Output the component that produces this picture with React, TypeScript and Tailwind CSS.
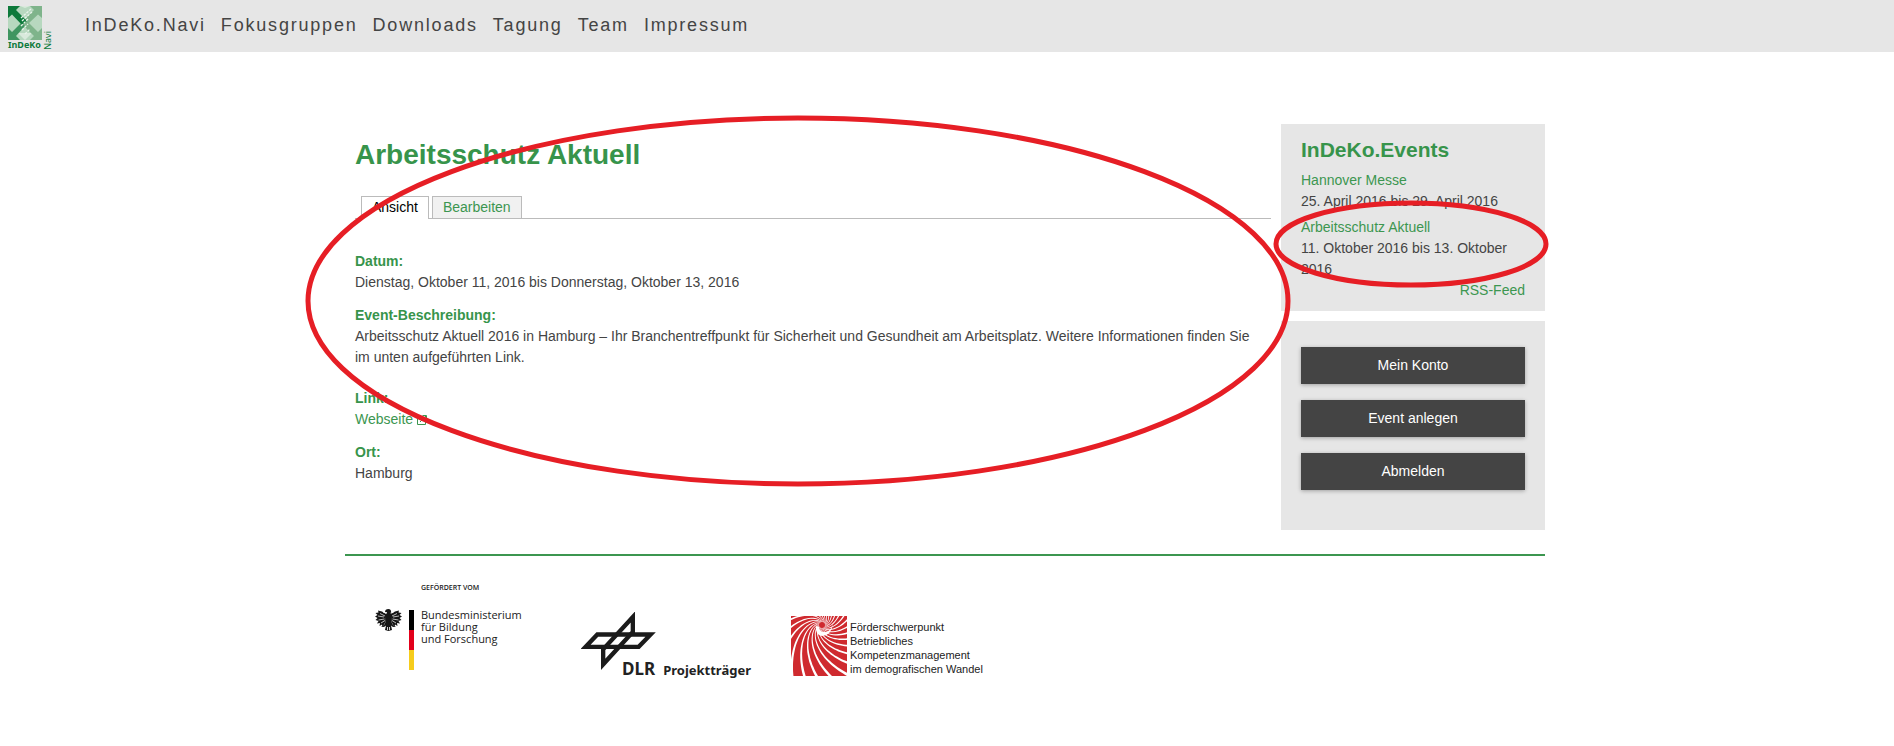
import React from 'react';

const navItems = ['InDeKo.Navi', 'Fokusgruppen', 'Downloads', 'Tagung', 'Team', 'Impressum'];
const accountActions = ['Mein Konto', 'Event anlegen', 'Abmelden'];

function NaviLogo() {
  return (
    <a href="#" className="flex h-12 w-12 items-end gap-0.5 text-[#0d7a3b]" aria-label="InDeKo Navi">
      <span className="flex flex-col">
        <svg width="34" height="34" viewBox="0 0 34 34" aria-hidden="true">
          <rect width="34" height="34" fill="#b7d8bf" />
          <path d="M17 2 L22 0 H12 Z M17 34 L24 27 L10 27 Z" fill="#d9eadc" />
          <path d="M34 0 V12 L30 8.500 L21 17 L30 26 L34 22 V34 H22 L26 30 L15 19 V15 L26 4 L22 0 Z" fill="#7fb48b" />
          <path d="M0 34 V22 L4 26 L13 17 L17 20 L8 30 L12 34 Z" fill="#3f9560" />
          <path d="M0 0 H12 L8 4 L19 15 L14 19 L4 8.500 L0 12 Z" fill="#0d7a3b" />
          <path d="M13 12 L23 3 M14 15 L24 6 M13 20 L20 13 M14 24 L20 18 M17 28 L22 23" stroke="#e9f4eb" strokeWidth="1.300" strokeDasharray="2.500 1.200" />
        </svg>
        <span className="h-2.5 font-['Noto_Sans'] text-[9px] leading-[10px] font-bold">InDeKo</span>
      </span>
      <span className="rotate-180 font-['Noto_Sans'] text-[9px] leading-[8px] [writing-mode:vertical-rl]">Navi</span>
    </a>
  );
}

function ExternalIcon() {
  return (
    <svg className="ml-1 inline-block" width="10" height="10" viewBox="0 0 10 10" fill="none" stroke="#3c9650" aria-hidden="true">
      <path d="M5 1.500 H0.500 V9.500 H8.500 V5.500 M3 7 L9 1 M5.500 0.500 H9.500 V4.500" />
    </svg>
  );
}

function Field({ label, children }: { label: string; children: React.ReactNode }) {
  return (
    <div>
      <h3 className="font-bold text-[#37944b]">{label}</h3>
      {children}
    </div>
  );
}

function Eagle() {
  const wing =
    'M11 5 L7 2.500 L3 1.500 L3.500 3.500 L0.500 4 L2.500 6 L0 7.500 L2.500 9 L0.500 11 L3.500 12 L2 14.500 L5 14 L4.500 17 L7 15.500 L7.500 18 L10.500 13 Z';
  return (
    <svg width="27" height="22" viewBox="0 0 27 22" fill="#161616" aria-hidden="true">
      <path d={wing} />
      <path d={wing} transform="matrix(-1 0 0 1 27 0)" />
      <path d="M10 3 Q10 0 13.500 0 Q16 0 16 2.500 L17 6 L16.500 13 L18 16 L21 17.500 L18 18 L16 16.500 L17 21 L13.500 22 L10 21 L11 16.500 L9 18 L6 17.500 L9 16 L10.500 13 L10 6 L12 4 Z" />
      <path d="M3 7 L9 8 M3.500 11 L9.500 10 M6 14 L10 11.500 M24 7 L18 8 M23.500 11 L17.500 10 M21 14 L17 11.500 M5 4.500 L10 7 M22 4.500 L17 7" stroke="#fff" strokeWidth="0.700" fill="none" />
      <path d="M8 3.200 L12 3.600 M15.500 4 L18.500 3.200 M12.500 18 V21 M14.500 18 V21" stroke="#fff" strokeWidth="0.800" />
    </svg>
  );
}

function DlrMark() {
  return (
    <svg width="75" height="58" viewBox="65 66 225 174" fill="none" stroke="#1b1b1b" strokeWidth="13" strokeMiterlimit="8" aria-hidden="true">
      <path d="M79 170.500 L114 133.500 H274 L238 170.500 Z" />
      <path d="M220.500 81 V126 L131.500 223 V178 Z" />
    </svg>
  );
}

function spiralRay(start: number) {
  const cx = 31;
  const cy = 9;
  const left: string[] = [];
  const right: string[] = [];
  for (let r = 3; r <= 69; r += 2) {
    const angle = start - 0.7 * Math.log(r / 3);
    const half = 0.025 + 0.25 / r;
    left.push(`${(cx + r * Math.cos(angle - half)).toFixed(1)},${(cy + r * Math.sin(angle - half)).toFixed(1)}`);
    right.unshift(`${(cx + r * Math.cos(angle + half)).toFixed(1)},${(cy + r * Math.sin(angle + half)).toFixed(1)}`);
  }
  return [...left, ...right].join(' ');
}

function SpiralMark() {
  const rays = Array.from({ length: 24 }, (_, i) => spiralRay((i * Math.PI * 2) / 24));
  return (
    <svg width="56" height="60" viewBox="0 0 56 60" aria-hidden="true">
      <rect width="56" height="60" fill="#cf2a2f" />
      {rays.map((points) => (
        <polygon key={points} points={points} fill="#fff" />
      ))}
      <path d="M25 10 Q24 19 31 20 Q40 20 42 8 Q39 16 34 16 Q28 16 28 11 Z" fill="#fff" />
    </svg>
  );
}

export default function App() {
  return (
    <div className="bg-white font-['Liberation_Sans',Arial,sans-serif] text-sm leading-[21px] text-[#444]">
      <header className="flex h-13 items-center bg-[#e6e6e6] pl-2">
        <NaviLogo />
        <nav className="ml-[29px] flex gap-[15px] pb-0.5 text-lg tracking-widest">
          {navItems.map((item) => (
            <a key={item} href="#">{item}</a>
          ))}
        </nav>
      </header>

      <div className="pr-1">
        <div className="relative mx-auto mt-18 max-w-[1200px]">
          <div className="flex gap-2.5">
            <main className="min-w-0 flex-1 pl-2.5">
              <h1 className="mt-[13px] text-[28px] leading-9 font-bold text-[#37944b]">Arbeitsschutz Aktuell</h1>
              <nav className="mt-[23px] flex gap-[3px] border-b border-[#bbb] pl-1.5">
                <a href="#" className="-mb-px border border-b-0 border-[#bbb] bg-white px-2.5 pb-px text-black">Ansicht</a>
                <a href="#" className="border border-b-0 border-[#bbb] bg-[#f1f1f1] px-2.5 text-[#3c9650]">Bearbeiten</a>
              </nav>
              <div className="mt-8 flex flex-col gap-3">
                <Field label="Datum:">
                  <p>Dienstag, Oktober 11, 2016 bis Donnerstag, Oktober 13, 2016</p>
                </Field>
                <Field label="Event-Beschreibung:">
                  <p className="mb-2 pr-2">
                    Arbeitsschutz Aktuell 2016 in Hamburg – Ihr Branchentreffpunkt für Sicherheit und Gesundheit am
                    Arbeitsplatz. Weitere Informationen finden Sie im unten aufgeführten Link.
                  </p>
                </Field>
                <Field label="Link:">
                  <a href="#" className="text-[#3c9650]">Webseite<ExternalIcon /></a>
                </Field>
                <Field label="Ort:">
                  <p>Hamburg</p>
                </Field>
              </div>
            </main>

            <aside className="flex w-66 shrink-0 flex-col gap-2.5">
              <section className="bg-[#e6e6e6] px-5 pt-3 pb-2.5">
                <h2 className="mb-1.5 text-[21px] leading-7 font-bold text-[#37944b]">InDeKo.Events</h2>
                <ul className="flex flex-col gap-[5px]">
                  <li>
                    <a href="#" className="block text-[#3c9650]">Hannover Messe</a>
                    25. April 2016 bis 29. April 2016
                  </li>
                  <li>
                    <a href="#" className="block text-[#3c9650]">Arbeitsschutz Aktuell</a>
                    11. Oktober 2016 bis 13. Oktober 2016
                  </li>
                </ul>
                <a href="#" className="block text-right text-[#3c9650]">RSS-Feed</a>
              </section>
              <section className="flex flex-col gap-4 bg-[#e6e6e6] px-5 pt-[26px] pb-10">
                {accountActions.map((action) => (
                  <button key={action} type="button" className="bg-[#444] py-2 text-white shadow-[0_1px_4px_rgba(0,0,0,0.3)]">
                    {action}
                  </button>
                ))}
              </section>
            </aside>
          </div>

          <footer className="mt-6 flex items-start border-t-2 border-[#3c9650] pt-7 pl-[30px] text-[#222]">
            <div className="flex w-[206px] items-start gap-[7px]">
              <div className="pt-[25px]"><Eagle /></div>
              <div className="mt-[26px] flex h-15 w-[5px] flex-col">
                <span className="flex-1 bg-black" />
                <span className="flex-1 bg-[#e2001a]" />
                <span className="flex-1 bg-[#f6cc1c]" />
              </div>
              <div className="font-['Open_Sans']">
                <p className="text-[7px] leading-[8px] font-semibold">GEFÖRDERT VOM</p>
                <p className="mt-[17px] text-[11px] leading-3 font-medium">
                  Bundesministerium
                  <br />
                  für Bildung
                  <br />
                  und Forschung
                </p>
              </div>
            </div>
            <div className="relative mt-7 h-[66px] w-[170px] font-['Noto_Sans'] font-bold">
              <DlrMark />
              <p className="absolute right-0 bottom-0 flex items-baseline gap-2 leading-4 whitespace-nowrap">
                <span className="text-[17px]">DLR</span>
                <span className="text-[13px]">Projektträger</span>
              </p>
            </div>
            <div className="mt-8 ml-10 flex items-start gap-[3px]">
              <SpiralMark />
              <p className="mt-1 text-[11px] leading-[14px]">
                Förderschwerpunkt
                <br />
                Betriebliches
                <br />
                Kompetenzmanagement
                <br />
                im demografischen Wandel
              </p>
            </div>
          </footer>

          <svg className="pointer-events-none absolute top-0 left-0 overflow-visible" width="1200" height="400" fill="none" stroke="#e61e25" strokeWidth="5" aria-hidden="true">
            <ellipse cx="453" cy="177" rx="490" ry="183" />
            <ellipse cx="1066" cy="120" rx="135" ry="41" />
          </svg>
        </div>
      </div>
    </div>
  );
}
